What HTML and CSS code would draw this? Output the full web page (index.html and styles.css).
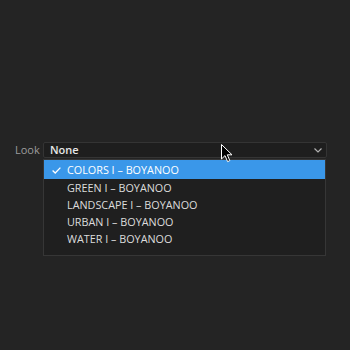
FILE: index.html
```html
<!DOCTYPE html>
<html>
<head>
    <title>Look</title>
    <link rel="stylesheet" href="styles.css">
</head>
<body>
    <div class="field">
        <span class="label">Look</span>
        <div class="select-wrap">
            <div class="select">
                <span class="value">None</span>
                <svg class="chevron" width="8" height="5" viewBox="0 0 8 5">
                    <polyline points="0.5,0.5 4,4 7.5,0.5" fill="none" stroke="#b0b0b0" stroke-width="1.2"/>
                </svg>
            </div>
            <ul class="menu">
                <li class="item selected">
                    <svg class="check" width="9" height="7" viewBox="0 0 9 7">
                        <polyline points="0.6,3.6 3.2,6 8.4,0.6" fill="none" stroke="#ffffff" stroke-width="1.3"/>
                    </svg>
                    COLORS I – BOYANOO
                </li>
                <li class="item">GREEN I – BOYANOO</li>
                <li class="item">LANDSCAPE I – BOYANOO</li>
                <li class="item">URBAN I – BOYANOO</li>
                <li class="item">WATER I – BOYANOO</li>
            </ul>
        </div>
    </div>

    <svg class="cursor" width="13" height="19" viewBox="0 0 13 19">
        <path d="M0.5,0.5 L0.5,15 L4,11.6 L6.6,17.6 L8.8,16.6 L6.3,10.8 L11,10.8 Z" fill="#000" stroke="#fff" stroke-width="1"/>
    </svg>
</body>
</html>
```

FILE: styles.css
```css
body {
    margin: 0;
    background-color: #242424;
    font-family: "Open Sans", sans-serif;
    width: 350px;
    height: 350px;
    position: relative;
}

.field {
    display: flex;
    align-items: flex-start;
    padding: 142px 0 0 15px;
}

.label {
    width: 28px;
    font-size: 11px;
    line-height: 16px;
    color: #9c9c9c;
}

.select-wrap {
    position: relative;
    width: 284px;
}

.select {
    display: flex;
    align-items: center;
    justify-content: space-between;
    height: 14px;
    padding: 0 4px 0 6px;
    background-color: #1e1e1e;
    border: 1px solid #343434;
    border-radius: 2px;
}

.value {
    font-size: 11px;
    font-weight: 600;
    color: #e6e6e6;
    line-height: 14px;
}

.chevron {
    display: block;
}

.menu {
    position: absolute;
    top: 17px;
    left: 0;
    width: 281px;
    margin: 0;
    padding: 0 0 8px 0;
    list-style: none;
    background-color: #1f1f1f;
    border: 1px solid #363636;
}

.item {
    position: relative;
    height: 17px;
    line-height: 17px;
    padding-left: 23px;
    font-size: 10.8px;
    color: #dcdcdc;
    white-space: nowrap;
}

.item.selected {
    height: 19px;
    line-height: 19px;
    background-color: #3a97e9;
    color: #ffffff;
}

.check {
    position: absolute;
    left: 8px;
    top: 7px;
}

.cursor {
    position: absolute;
    left: 221px;
    top: 144px;
}
```
